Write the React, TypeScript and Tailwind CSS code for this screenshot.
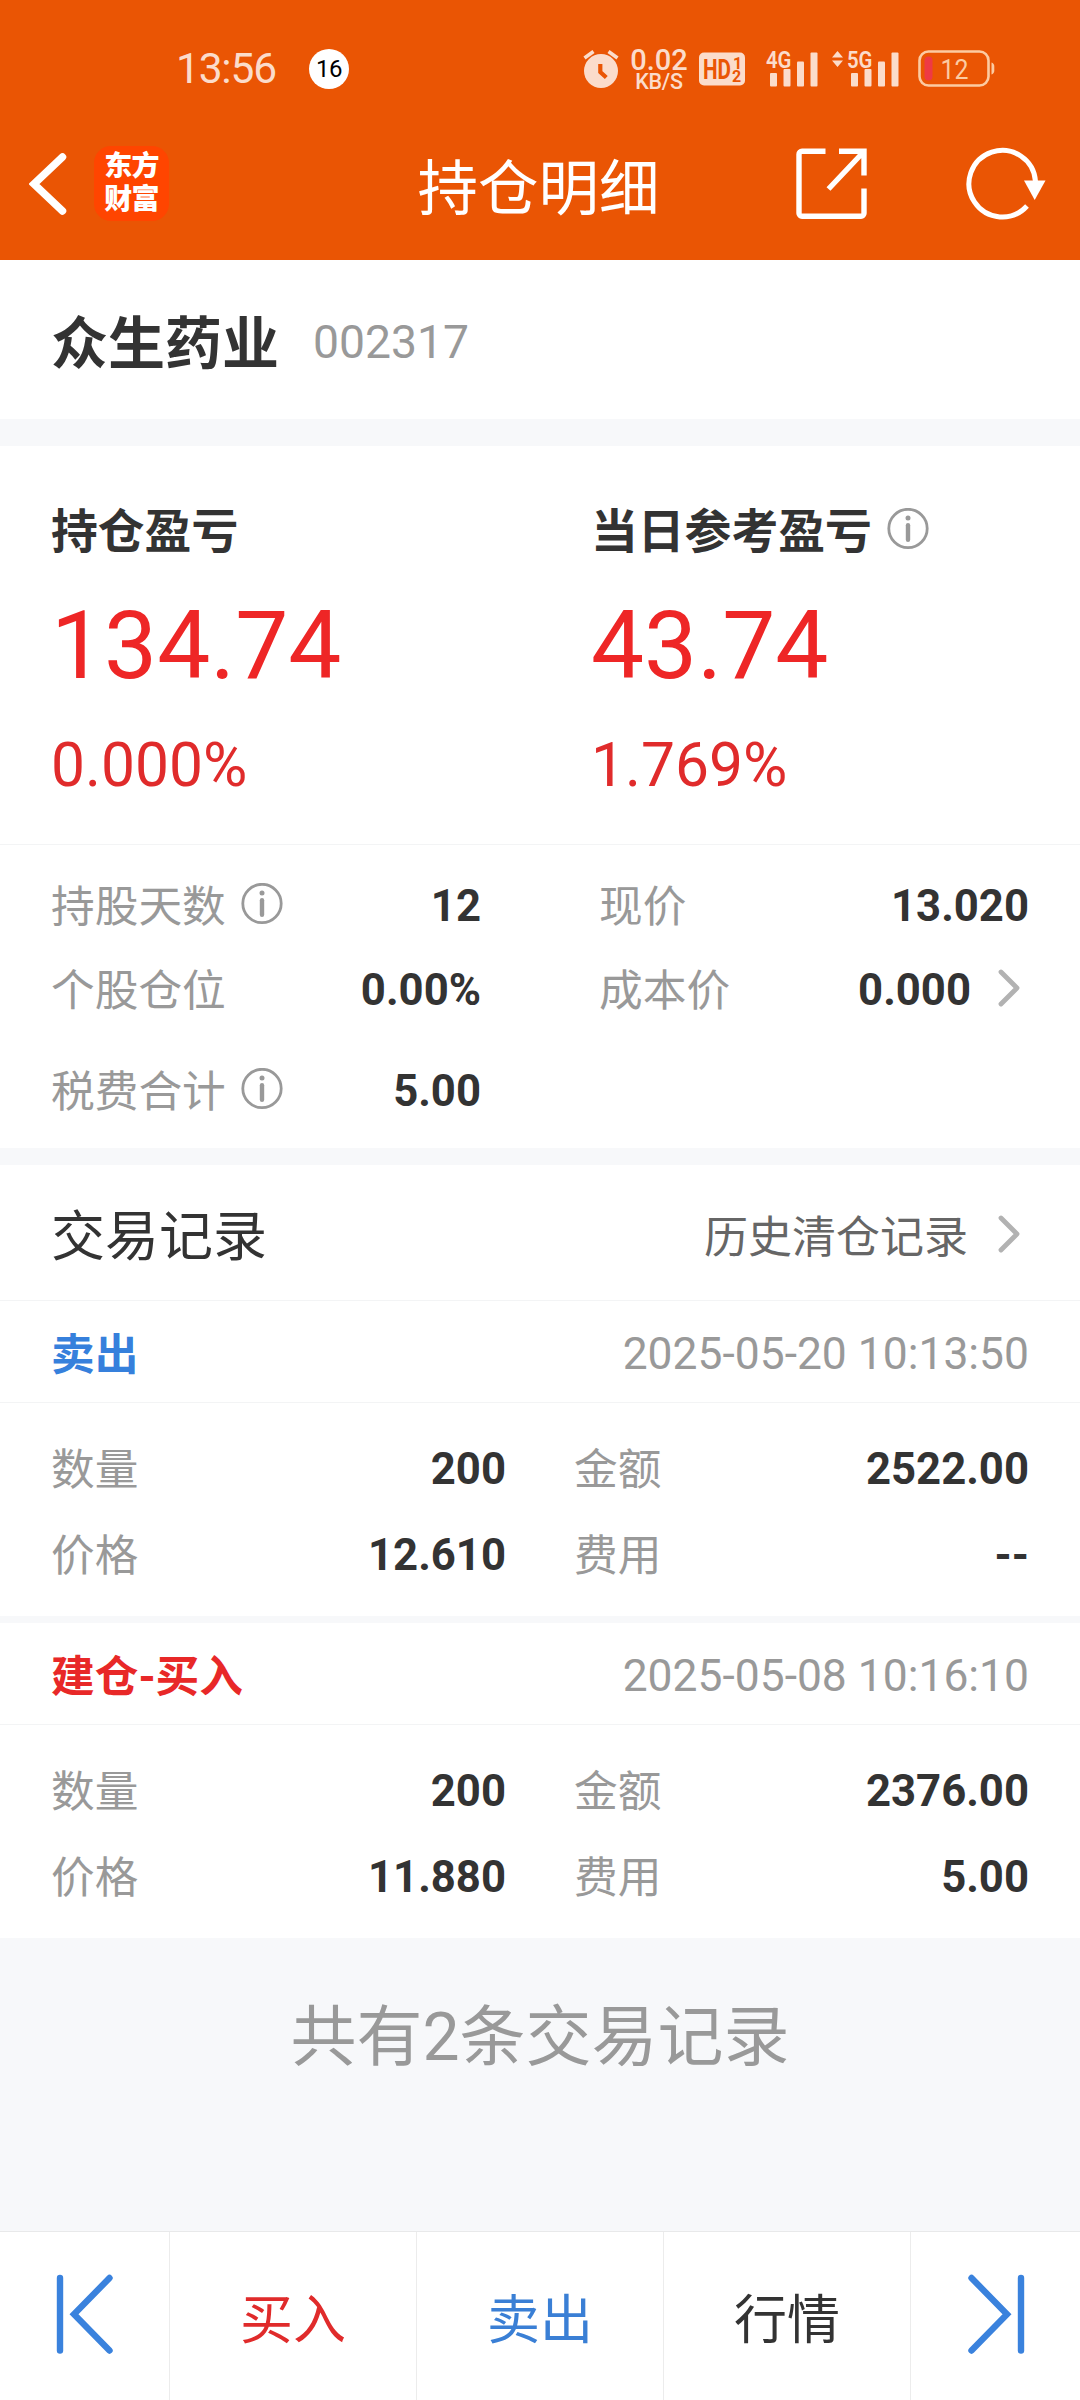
import { Fragment } from 'react';
import type { ReactNode } from 'react';

type Side = 'sell' | 'buy';

interface TradeRecord {
  side: Side;
  label: string;
  time: string;
  qty: string;
  amount: string;
  price: string;
  fee: string;
}

const records: TradeRecord[] = [
  {
    side: 'sell',
    label: '卖出',
    time: '2025-05-20 10:13:50',
    qty: '200',
    amount: '2522.00',
    price: '12.610',
    fee: '--',
  },
  {
    side: 'buy',
    label: '建仓-买入',
    time: '2025-05-08 10:16:10',
    qty: '200',
    amount: '2376.00',
    price: '11.880',
    fee: '5.00',
  },
];

function InfoIcon({ className = '' }: { className?: string }) {
  return (
    <svg viewBox="0 0 42 42" className={`h-[42px] w-[42px] shrink-0 ${className}`} fill="none">
      <circle cx="21" cy="20.5" r="19.2" stroke="#999" strokeWidth="2.8" />
      <circle cx="21" cy="9.9" r="2.5" fill="#999" />
      <path d="M21 17.3v14.4" stroke="#999" strokeWidth="4.4" strokeLinecap="round" />
    </svg>
  );
}

function ChevronIcon({ className = '' }: { className?: string }) {
  return (
    <svg viewBox="0 0 22 38" className={`h-[38px] w-[22px] shrink-0 ${className}`} fill="none">
      <path d="M3 3 19 19 3 35" stroke="#b2b2b2" strokeWidth="4.8" strokeLinecap="round" strokeLinejoin="round" />
    </svg>
  );
}

function SignalBars({ label, roaming = false }: { label: string; roaming?: boolean }) {
  return (
    <svg viewBox="0 0 70 52" className="h-[52px] w-[70px] shrink-0" fill="#fbdccb">
      {roaming && <path d="M1 14.5 6.5 8 12 14.5zM1 17.5h11L6.5 24z" />}
      <text x="16" y="24.5" fontSize="24.5" fontWeight="600" fontFamily="Roboto, sans-serif" textLength="25.5" lengthAdjust="spacingAndGlyphs">
        {label}
      </text>
      <rect x="20" y="30" width="7" height="13.5" rx="1" />
      <rect x="33.5" y="26" width="7" height="17.5" rx="1" />
      <rect x="47" y="18.5" width="7" height="25" rx="1" />
      <rect x="60.5" y="9.5" width="7" height="34" rx="1" />
    </svg>
  );
}

function StatusBar() {
  return (
    <div className="flex h-[107px] items-center pt-[31px] pl-[176px] text-[#fbdccb]">
      <span className="w-[133px] shrink-0 text-[42.5px] leading-none tracking-[-1.2px]">13:56</span>
      <span className="flex h-10 w-10 shrink-0 items-center justify-center rounded-full bg-white text-[24px] leading-none tracking-[-0.5px] text-black">
        16
      </span>

      <svg viewBox="0 0 36 40" className="ml-[234px] h-[40px] w-[36px] shrink-0" fill="none">
        <circle cx="18" cy="22" r="17" fill="#fbdccb" />
        <path d="M1.5 9 10.5 2.5M34.5 9 25.5 2.5" stroke="#fbdccb" strokeWidth="3.6" />
        <path d="M17.3 15v8l6 5.5" stroke="#ea5504" strokeWidth="4.2" />
      </svg>

      <div className="ml-[9px] flex w-[62px] shrink-0 flex-col items-center pt-[3px] font-medium">
        <span className="text-[29px] leading-[22px]">0.02</span>
        <span className="mt-[1px] text-[21.5px] leading-[20px] tracking-[-0.3px]">KB/S</span>
      </div>

      <svg viewBox="0 0 46 34" className="ml-[9px] h-[34px] w-[46px] shrink-0" fill="#ea5504" fontFamily="Roboto, sans-serif" fontWeight="700">
        <rect x="0" y="0.5" width="46" height="33" rx="5" fill="#fbdccb" />
        <text x="4" y="26.5" fontSize="27" textLength="28" lengthAdjust="spacingAndGlyphs">HD</text>
        <text x="34" y="16.5" fontSize="16">1</text>
        <text x="33" y="30" fontSize="16">2</text>
      </svg>

      <div className="ml-[5px] flex shrink-0 gap-[11px]">
        <SignalBars label="4G" />
        <SignalBars label="5G" roaming />
      </div>

      <svg viewBox="0 0 77 38" className="ml-[17px] h-[38px] w-[77px] shrink-0" fill="none">
        <rect x="1.5" y="1.5" width="69" height="34" rx="9" stroke="#fccba2" strokeWidth="2.6" />
        <rect x="6.5" y="6.5" width="8" height="24" rx="4" fill="#ee3a44" />
        <path d="M73.5 12.5c1.8.5 2.8 2 2.8 4v4c0 2-1 3.5-2.8 4z" fill="#fccba2" />
        <text x="22.5" y="28.5" fontSize="27.5" fill="#fccba2" fontFamily="Roboto, sans-serif" textLength="28" lengthAdjust="spacingAndGlyphs">12</text>
      </svg>
    </div>
  );
}

function NavBar() {
  return (
    <div className="grid h-[153px] grid-cols-[1fr_auto_1fr] items-center text-white">
      <div className="flex items-center pl-[29px]">
        <svg viewBox="0 0 38 62" className="h-[62px] w-[38px]" fill="none">
          <path d="M33.5 4 5 31l28.5 27" stroke="currentColor" strokeWidth="7.5" strokeLinecap="round" />
        </svg>
        <div className="ml-[27px] flex h-[75px] w-[75px] flex-col items-center justify-center rounded-[17px] bg-[#ff4500] pb-[2px] text-[28px] leading-[33px] font-black tracking-[-0.8px]">
          <span>东方</span>
          <span>财富</span>
        </div>
      </div>

      <h1 className="pt-[13px] pr-[3px] text-[60.5px] leading-none">持仓明细</h1>

      <div className="flex items-center justify-end pr-[33px]">
        <svg viewBox="0 0 72 72" className="h-[72px] w-[72px]" fill="none" stroke="currentColor" strokeWidth="5.4">
          <path d="M29.5 3.2H6a3 3 0 0 0-3 3v59a3 3 0 0 0 3 3h59a3 3 0 0 0 3-3V40.5" />
          <path d="M43 3.2h25V27.5M32.5 41 66.5 5" />
        </svg>
        <svg viewBox="0 0 82 74" className="ml-[97px] h-[74px] w-[82px]" fill="none">
          <path d="M70.5 34.5A33.3 33.3 0 1 0 62 59" stroke="currentColor" strokeWidth="5" />
          <path d="M59 33.5H80.5L69.7 53z" fill="currentColor" />
        </svg>
      </div>
    </div>
  );
}

function ProfitCard({ title, value, percent, info = false }: { title: string; value: string; percent: string; info?: boolean }) {
  return (
    <div className="w-[540px] pl-[51px]">
      <div className="flex h-[64px] items-center">
        <span className="pt-[4px] text-[46.8px] leading-none font-bold text-[#333]">{title}</span>
        {info && <InfoIcon className="mb-[2px] ml-[15px]" />}
      </div>
      <div className="mt-[36px] text-[94.5px] leading-[96px] text-[#ee2626]">{value}</div>
      <div className="mt-[42px] text-[60.5px] leading-[60px] text-[#e02b2b]">{percent}</div>
    </div>
  );
}

function Label({ children }: { children: ReactNode }) {
  return <span className="pt-[6px] text-[43.7px] leading-none text-[#999]">{children}</span>;
}

function Value({ children }: { children: ReactNode }) {
  return <span className="pt-[3px] text-[43.7px] leading-none font-bold text-[#333]">{children}</span>;
}

function StatRow({ label, value, info = false, arrow = false }: { label: string; value: string; info?: boolean; arrow?: boolean }) {
  return (
    <div className="flex h-full items-center justify-between">
      <div className="flex items-center">
        <Label>{label}</Label>
        {info && <InfoIcon className="mb-[2px] ml-[15px]" />}
      </div>
      <div className="flex items-center">
        <Value>{value}</Value>
        {arrow && <ChevronIcon className="mr-[9px] mb-[2px] ml-[27px]" />}
      </div>
    </div>
  );
}

function RecordCard({ record }: { record: TradeRecord }) {
  const cells = [
    ['数量', record.qty],
    ['金额', record.amount],
    ['价格', record.price],
    ['费用', record.fee],
  ];
  return (
    <div className="bg-white">
      <div className="flex h-[102px] items-center justify-between border-b border-[#f3f4f5] px-[51px]">
        <span className={`pt-[8px] text-[43.7px] leading-none font-bold ${record.side === 'sell' ? 'text-[#3680dc]' : 'text-[#e82828]'}`}>
          {record.label}
        </span>
        <span className="pt-[5px] text-[44.4px] leading-none text-[#999]">{record.time}</span>
      </div>
      <div className="grid h-[213px] grid-cols-[455px_455px] grid-rows-[86px_86px] gap-x-[68px] px-[51px] pt-[22px]">
        {cells.map(([label, value]) => (
          <div key={label} className="flex items-center justify-between">
            <Label>{label}</Label>
            <Value>{value}</Value>
          </div>
        ))}
      </div>
    </div>
  );
}

function SkipIcon({ flip = false }: { flip?: boolean }) {
  return (
    <svg viewBox="0 0 58 80" className={`h-[80px] w-[58px] ${flip ? '-scale-x-100' : ''}`} fill="none" stroke="#3a82dd" strokeWidth="6.4" strokeLinecap="round">
      <path d="M4 4v72.5" />
      <path d="M53.5 4 18 40.3 53.5 76.5" />
    </svg>
  );
}

function FooterBar() {
  return (
    <nav className="grid h-[169px] grid-cols-[170px_247px_247px_247px_169px] divide-x divide-[#ececec] border-t border-[#e8e9ea] bg-white text-[53px] leading-none">
      <button className="flex items-center justify-center pb-[5px]">
        <SkipIcon />
      </button>
      <button className="flex items-center justify-center pt-[10px] text-[#e02b2b]">买入</button>
      <button className="flex items-center justify-center pt-[10px] text-[#3a7fd5]">卖出</button>
      <button className="flex items-center justify-center pt-[10px] text-[#333]">行情</button>
      <button className="flex items-center justify-center pb-[5px]">
        <SkipIcon flip />
      </button>
    </nav>
  );
}

export default function App() {
  return (
    <div className="flex h-[2400px] w-[1080px] flex-col overflow-hidden bg-[#f7f8fa] font-['Roboto','Noto_Sans_CJK_SC',sans-serif]">
      <header className="h-[260px] shrink-0 bg-[#ea5504]">
        <StatusBar />
        <NavBar />
      </header>

      {/* Stock name */}
      <section className="flex h-[159px] items-center bg-white pl-[51px]">
        <span className="pt-[10px] text-[57px] leading-none font-bold text-[#333]">众生药业</span>
        <span className="ml-[34px] pt-[5px] text-[46.3px] leading-none text-[#999]">002317</span>
      </section>

      {/* Profit overview */}
      <section className="mt-[27px] bg-white">
        <div className="flex h-[399px] border-b border-[#f3f4f5] pt-[52px]">
          <ProfitCard title="持仓盈亏" value="134.74" percent="0.000%" />
          <ProfitCard title="当日参考盈亏" value="43.74" percent="1.769%" info />
        </div>
        <div className="grid h-[303px] grid-cols-[430px_430px] grid-rows-[84px_84px_118px] gap-x-[118px] px-[51px] pt-[18px]">
          <StatRow label="持股天数" value="12" info />
          <StatRow label="现价" value="13.020" />
          <StatRow label="个股仓位" value="0.00%" />
          <StatRow label="成本价" value="0.000" arrow />
          <StatRow label="税费合计" value="5.00" info />
        </div>
      </section>

      {/* Trade records */}
      <section className="mt-[17px]">
        <div className="flex h-[136px] items-center justify-between border-b border-[#f3f4f5] bg-white pr-[60px] pl-[51px]">
          <h2 className="pt-[10px] text-[54px] leading-none text-[#333]">交易记录</h2>
          <div className="flex items-center pt-[2px]">
            <span className="pt-[9px] text-[44px] leading-none text-[#666]">历史清仓记录</span>
            <ChevronIcon className="ml-[30px]" />
          </div>
        </div>
        {records.map((record, i) => (
          <Fragment key={record.time}>
            {i > 0 && <div className="h-[7px]" />}
            <RecordCard record={record} />
          </Fragment>
        ))}
      </section>

      <p className="mt-[67px] text-center text-[66px] leading-[66px] text-[#999]">共有2条交易记录</p>

      <div className="mt-auto">
        <FooterBar />
      </div>
    </div>
  );
}
